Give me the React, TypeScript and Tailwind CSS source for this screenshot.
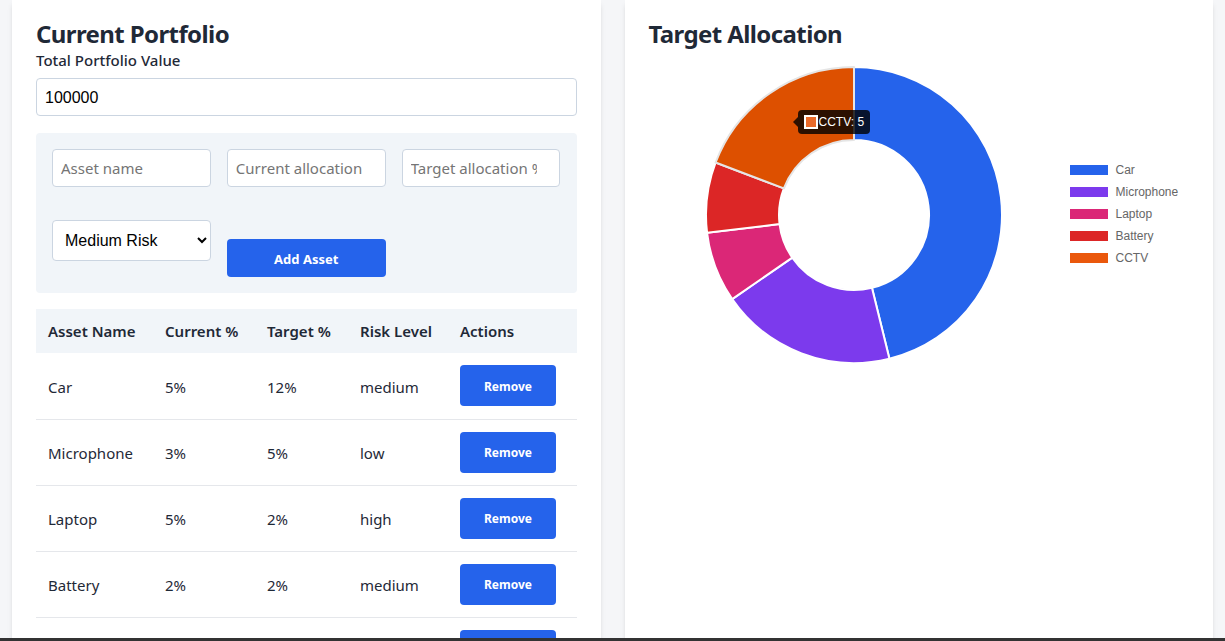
import React from "react"

const assets = [
  { name: "Car", current: 5, target: 12, risk: "medium", color: "#2563eb" },
  { name: "Microphone", current: 3, target: 5, risk: "low", color: "#7c3aed" },
  { name: "Laptop", current: 5, target: 2, risk: "high", color: "#db2777" },
  { name: "Battery", current: 2, target: 2, risk: "medium", color: "#dc2626" },
  { name: "CCTV", current: 4, target: 5, risk: "low", color: "#ea580c" },
]

// angle measured from 12 o'clock, clockwise
function pt(cx: number, cy: number, r: number, a: number) {
  const rad = ((a - 90) * Math.PI) / 180
  return [cx + r * Math.cos(rad), cy + r * Math.sin(rad)]
}

function arcPath(cx: number, cy: number, r0: number, r1: number, a0: number, a1: number) {
  const large = a1 - a0 > 180 ? 1 : 0
  const [x1, y1] = pt(cx, cy, r1, a0)
  const [x2, y2] = pt(cx, cy, r1, a1)
  const [x3, y3] = pt(cx, cy, r0, a1)
  const [x4, y4] = pt(cx, cy, r0, a0)
  return `M${x1} ${y1} A${r1} ${r1} 0 ${large} 1 ${x2} ${y2} L${x3} ${y3} A${r0} ${r0} 0 ${large} 0 ${x4} ${y4} Z`
}

function Donut() {
  const total = assets.reduce((s, a) => s + a.target, 0)
  let start = 0
  return (
    <svg width="410" height="310" viewBox="0 0 410 310">
      {assets.map((a) => {
        const sweep = (a.target / total) * 360
        const d = arcPath(205, 155, 75, 148, start, start + sweep)
        start += sweep
        const hovered = a.name === "CCTV"
        return (
          <path
            key={a.name}
            d={d}
            fill={hovered ? "#dd5000" : a.color}
            stroke={hovered ? "#e5e5e5" : "#ffffff"}
            strokeWidth={2}
            strokeLinejoin="round"
          />
        )
      })}
    </svg>
  )
}

const fieldClass =
  "h-[38px] rounded border border-[#cbd5e1] bg-white px-2 text-[15px] placeholder:text-[#757575]"

export default function App() {
  return (
    <div className="min-h-screen bg-[#f5f6f8] px-3 font-['Noto_Sans',sans-serif] text-[#1f2937]">
      <div className="grid grid-cols-2 gap-6">
        {/* Left card */}
        <div className="bg-white px-6 pt-[18px] pb-6 shadow-md">
          <h2 className="text-2xl font-bold leading-8 tracking-[-0.6px]">Current Portfolio</h2>
          <label className="block text-[15px] font-medium leading-5">Total Portfolio Value</label>
          <input
            defaultValue="100000"
            className="mt-2 h-[38px] w-full rounded border border-[#cbd5e1] px-2 pt-[2px] font-['Liberation_Sans',sans-serif] text-base text-black"
          />

          <div className="mt-[17px] rounded bg-[#f1f5f9] p-4">
            <div className="grid grid-cols-3 gap-4">
              <input placeholder="Asset name" className={fieldClass} />
              <input placeholder="Current allocation" className={fieldClass} />
              <input placeholder="Target allocation %" className={fieldClass + " pr-[22px]"} />
            </div>
            <div className="mt-[33px] grid h-[57px] grid-cols-3 gap-4">
              <select
                defaultValue="medium"
                className="h-[41px] self-start rounded border border-[#cbd5e1] bg-white pl-2 pr-1 font-['Liberation_Sans',sans-serif] text-base text-black"
              >
                <option value="low">Low Risk</option>
                <option value="medium">Medium Risk</option>
                <option value="high">High Risk</option>
              </select>
              <button className="h-[38px] self-end rounded bg-[#2563eb] pt-1 text-[13px] font-bold text-white">
                Add Asset
              </button>
            </div>
          </div>

          <table className="mt-4 w-full border-collapse text-left text-[15px]">
            <thead>
              <tr className="h-11 bg-[#f1f5f9]">
                <th className="w-[117px] px-3 font-semibold">Asset Name</th>
                <th className="w-[102px] px-3 font-semibold">Current %</th>
                <th className="w-[93px] px-3 font-semibold">Target %</th>
                <th className="w-[100px] px-3 font-semibold">Risk Level</th>
                <th className="px-3 font-semibold">Actions</th>
              </tr>
            </thead>
            <tbody>
              {assets.map((a) => (
                <tr key={a.name} className="h-[66px] border-b border-[#e5e7eb]">
                  <td className="px-3 pt-[2px]">{a.name}</td>
                  <td className="px-3 pt-[2px]">{a.current}%</td>
                  <td className="px-3 pt-[2px]">{a.target}%</td>
                  <td className="px-3 pt-[2px]">{a.risk}</td>
                  <td className="px-3">
                    <button className="h-[41px] w-24 rounded bg-[#2563eb] pt-[2px] text-xs font-bold text-white">
                      Remove
                    </button>
                  </td>
                </tr>
              ))}
            </tbody>
          </table>
        </div>

        {/* Right card */}
        <div className="bg-white px-6 pt-[18px] pb-6 shadow-md">
          <h2 className="text-2xl font-bold leading-8 tracking-[-0.6px]">Target Allocation</h2>
          <div className="relative mt-[10px] flex h-[310px] items-center">
            <Donut />
            <ul className="mb-[2px] ml-[11px] flex flex-col gap-[8px] font-['Liberation_Sans',sans-serif] text-xs text-[#666]">
              {assets.map((a) => (
                <li key={a.name} className="flex h-[14px] items-center gap-2">
                  <span className="h-[10px] w-[38px]" style={{ backgroundColor: a.color }} />
                  {a.name}
                </li>
              ))}
            </ul>

            {/* Tooltip */}
            <div className="absolute left-[149px] top-[50px] flex h-6 items-center gap-[1px] rounded bg-black/80 pl-[6px] pr-[6px] font-['Liberation_Sans',sans-serif] text-xs text-white">
              <span className="absolute -left-[5px] top-[7px] h-0 w-0 border-y-[5px] border-r-[5px] border-y-transparent border-r-black/80" />
              <span className="h-[14px] w-[14px] border-2 border-white bg-[#ea6a2a]" />
              CCTV: 5
            </div>
          </div>
        </div>
      </div>
      <div className="fixed inset-x-0 bottom-0 h-[3px] bg-[#333]" />
    </div>
  )
}
